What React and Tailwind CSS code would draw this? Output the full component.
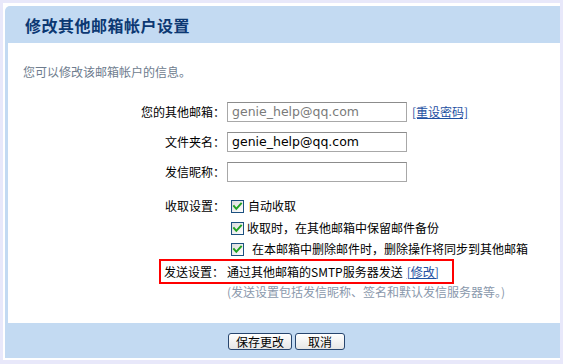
import React from "react";

const cjk = { fontFamily: '"Noto Sans CJK SC", "Noto Sans", sans-serif' };
const latin = { fontFamily: '"DejaVu Sans", Verdana, sans-serif' };

function Check() {
  return (
    <span className="inline-flex w-[13px] h-[13px] border border-[#1c5180] bg-gradient-to-br from-[#dcdcdc] to-white items-center justify-center shrink-0">
      <svg width="11" height="11" viewBox="0 0 11 11">
        <path d="M2 5.2 L4.3 7.8 L9 2.6" fill="none" stroke="#21a121" strokeWidth="2" strokeLinecap="square" />
      </svg>
    </span>
  );
}

function Label({ children }) {
  return <div className="w-[217px] text-right shrink-0 pr-0">{children}</div>;
}

function Field({ value, muted }) {
  return (
    <div
      className={`ml-[2px] w-[180px] h-[20px] border border-[#a8a8a8] border-t-[#8c8c8c] bg-white flex items-center pl-[4px] text-[12.5px] ${muted ? "text-[#7a7a7a]" : "text-black"}`}
      style={latin}
    >
      {value}
    </div>
  );
}

export default function App() {
  return (
    <div className="w-[563px] h-[364px] bg-[#e8e8fa] pt-[3px] pl-[3px] pr-[3px] pb-[4px] text-[12px] text-black" style={cjk}>
      <div className="h-full bg-white pt-[3px] pl-[2px] pb-[2px] flex flex-col">
        <div className="flex-1 flex flex-col bg-[#c3daf2] rounded-tl-[5px]">
          <div className="h-[37px] shrink-0 flex items-center pl-[20px]">
            <span className="text-[16px] font-bold tracking-[0.5px] text-[#0c3872]">修改其他邮箱帐户设置</span>
          </div>
          <div className="ml-[3px] flex-1 bg-white flex flex-col">
            <div className="pt-[21px] pl-[15px] h-[37px] leading-[16px] text-[#6e7c8e]">您可以修改该邮箱帐户的信息。</div>
            <div className="mt-[17px] h-[30px] flex items-center">
              <Label>您的其他邮箱：</Label>
              <Field value="genie_help@qq.com" muted />
              <a className="ml-[5px] text-[#1e50a2] underline">[重设密码]</a>
            </div>
            <div className="h-[30px] flex items-center">
              <Label>文件夹名：</Label>
              <Field value="genie_help@qq.com" />
            </div>
            <div className="h-[30px] flex items-center">
              <Label>发信昵称：</Label>
              <Field value="" />
            </div>
            <div className="mt-[8px] h-[22px] flex items-center">
              <Label>收取设置：</Label>
              <div className="ml-[6px] flex items-center">
                <Check />
                <span className="ml-[4px]">自动收取</span>
              </div>
            </div>
            <div className="h-[22px] flex items-center">
              <div className="w-[223px] shrink-0" />
              <Check />
              <span className="ml-[3px]">收取时，在其他邮箱中保留邮件备份</span>
            </div>
            <div className="h-[20px] flex items-center">
              <div className="w-[223px] shrink-0" />
              <Check />
              <span className="ml-[8px]">在本邮箱中删除邮件时，删除操作将同步到其他邮箱</span>
            </div>
            <div className="h-[25px] flex">
              <div className="w-[151px] shrink-0" />
              <div className="w-[295px] h-[25px] border-2 border-[#ff0000] flex items-center pl-[3px]">
                <span className="w-[63px] shrink-0">发送设置：</span>
                <span>通过其他邮箱的SMTP服务器发送</span>
                <a className="ml-[4px] text-[#1e50a2] underline">[修改]</a>
              </div>
            </div>
            <div className="h-[16px] flex items-center">
              <div className="w-[219px] shrink-0" />
              <span className="text-[#8a98ac]">(发送设置包括发信昵称、签名和默认发信服务器等。)</span>
            </div>
          </div>
          <div className="h-[35px] shrink-0 flex items-center pl-[223px] pt-[1px] gap-[3px]">
            <button className="w-[64px] h-[17px] rounded-[3px] border border-[#27456e] bg-gradient-to-b from-white to-[#e6e6e6] text-[12px] leading-[15px] text-black" style={cjk}>保存更改</button>
            <button className="w-[50px] h-[17px] rounded-[3px] border border-[#27456e] bg-gradient-to-b from-white to-[#e6e6e6] text-[12px] leading-[15px] text-black" style={cjk}>取消</button>
          </div>
        </div>
      </div>
    </div>
  );
}
